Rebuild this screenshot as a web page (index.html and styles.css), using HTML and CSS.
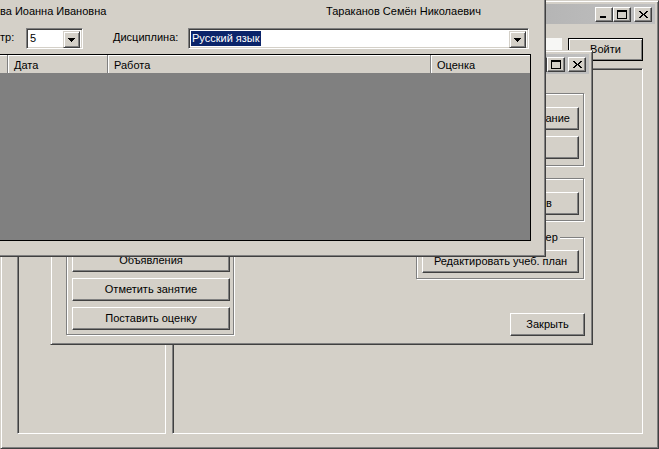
FILE: index.html
```html
<!DOCTYPE html>
<html lang="ru">
<head>
<meta charset="utf-8">
<title>Электронный журнал</title>
<link rel="stylesheet" href="styles.css">
</head>
<body>

<div class="win win-back">
  <div class="titlebar">
    <div class="caption-btns">
      <span class="cbtn cbtn-min"><svg width="6" height="2" viewBox="0 0 6 2"><path d="M0 0h6v2H0z" fill="#000"/></svg></span>
      <span class="cbtn"><svg width="10" height="9" viewBox="0 0 10 9"><path d="M0 0h10v2H0z M0 2h1v7H0z M9 2h1v7H9z M1 8h8v1H1z" fill="#000"/></svg></span>
      <span class="cbtn cbtn-close"><svg width="9" height="7" viewBox="0 0 9 7"><path d="M0 0h2v1H0z M7 0h2v1H7z M1 1h2v1H1z M6 1h2v1H6z M2 2h2v1H2z M5 2h2v1H5z M3 3h3v1H3z M2 4h2v1H2z M5 4h2v1H5z M1 5h2v1H1z M6 5h2v1H6z M0 6h2v1H0z M7 6h2v1H7z" fill="#000"/></svg></span>
    </div>
  </div>
  <div class="back-body">
    <div class="login-row">
      <div class="textbox"></div>
      <button class="btn btn-default">Войти</button>
    </div>
    <div class="panels">
      <div class="panel panel-left"></div>
      <div class="panel panel-right"></div>
    </div>
  </div>
</div>

<div class="win win-mid">
  <div class="titlebar">
    <div class="caption-btns">
      <span class="cbtn cbtn-min"><svg width="6" height="2" viewBox="0 0 6 2"><path d="M0 0h6v2H0z" fill="#000"/></svg></span>
      <span class="cbtn"><svg width="10" height="9" viewBox="0 0 10 9"><path d="M0 0h10v2H0z M0 2h1v7H0z M9 2h1v7H9z M1 8h8v1H1z" fill="#000"/></svg></span>
      <span class="cbtn cbtn-close"><svg width="9" height="7" viewBox="0 0 9 7"><path d="M0 0h2v1H0z M7 0h2v1H7z M1 1h2v1H1z M6 1h2v1H6z M2 2h2v1H2z M5 2h2v1H5z M3 3h3v1H3z M2 4h2v1H2z M5 4h2v1H5z M1 5h2v1H1z M6 5h2v1H6z M0 6h2v1H0z M7 6h2v1H7z" fill="#000"/></svg></span>
    </div>
  </div>
  <div class="mid-body">
    <div class="group group-left">
      <span class="group-label">Учитель</span>
      <div class="btn-stack stack-left">
        <button class="btn btn-wide">Расписание</button>
        <button class="btn btn-wide">Журнал</button>
        <button class="btn btn-wide">Домашнее задание</button>
        <button class="btn btn-wide">Ученики</button>
        <button class="btn btn-wide">Классы</button>
        <button class="btn btn-wide">Объявления</button>
        <button class="btn btn-wide">Отметить занятие</button>
        <button class="btn btn-wide">Поставить оценку</button>
      </div>
    </div>
    <div class="right-col">
      <div class="group g1">
        <span class="group-label">Завуч</span>
        <div class="btn-stack">
          <button class="btn btn-wide">Редактировать расписание</button>
          <button class="btn btn-wide">Журнал</button>
        </div>
      </div>
      <div class="group g2">
        <span class="group-label">Кадры</span>
        <div class="btn-stack">
          <button class="btn btn-wide">Список сотрудников</button>
        </div>
      </div>
      <div class="group g3">
        <span class="group-label label-g3">Диспетчер</span>
        <div class="btn-stack">
          <button class="btn btn-wide">Редактировать учеб. план</button>
        </div>
      </div>
      <button class="btn btn-close">Закрыть</button>
    </div>
  </div>
</div>

<div class="win win-front">
  <div class="titlebar titlebar-active"></div>
  <div class="front-body">
    <div class="names-row">
      <span class="name-student">ва Иоанна Ивановна</span>
      <span class="name-teacher">Тараканов Семён Николаевич</span>
    </div>
    <div class="filter-row">
      <span class="lbl lbl-sem">тр:</span>
      <div class="combo combo-sem">
        <span class="combo-text">5</span>
        <span class="combo-btn"><svg width="7" height="4" viewBox="0 0 7 4"><path d="M0 0h7v1H0z M1 1h5v1H1z M2 2h3v1H2z M3 3h1v1H3z" fill="#000"/></svg></span>
      </div>
      <span class="lbl lbl-disc">Дисциплина:</span>
      <div class="combo combo-disc">
        <span class="combo-text"><span class="sel">Русский язык</span></span>
        <span class="combo-btn"><svg width="7" height="4" viewBox="0 0 7 4"><path d="M0 0h7v1H0z M1 1h5v1H1z M2 2h3v1H2z M3 3h1v1H3z" fill="#000"/></svg></span>
      </div>
    </div>
    <div class="grid">
      <div class="grid-head">
        <div class="hcell hc0"></div>
        <div class="hcell hc1">Дата</div>
        <div class="hcell hc2">Работа</div>
        <div class="hcell hc3">Оценка</div>
      </div>
      <div class="grid-body"></div>
    </div>
  </div>
</div>

</body>
</html>
```

FILE: styles.css
```css
* { box-sizing: border-box; }
html, body { margin: 0; padding: 0; }
body {
  position: relative;
  width: 659px;
  height: 449px;
  overflow: hidden;
  background: #d4d0c8;
  font-family: "Liberation Sans", Arial, sans-serif;
  font-size: 11px;
  line-height: 13px;
  color: #000;
}

/* ---------- classic window frame ---------- */
.win {
  position: absolute;
  display: flex;
  flex-direction: column;
  background: #d4d0c8;
  border: 1px solid;
  border-color: #d4d0c8 #404040 #404040 #d4d0c8;
  box-shadow: inset 1px 1px 0 #fff, inset -1px -1px 0 #808080;
  padding: 3px;
}
.win-back  { left: 0;     top: 0;     width: 659px; height: 449px; }
.win-mid   { left: 50px;  top: 50px;  width: 543px; height: 295px; }
.win-front { left: -12px; top: -26px; width: 558px; height: 283px; }

.titlebar {
  flex: none;
  height: 20px;
  display: flex;
  justify-content: flex-end;
  align-items: flex-start;
  padding: 3px 3px 0 0;
  background: linear-gradient(to right, #808080, #c0c0c0);
}
.titlebar-active { background: linear-gradient(to right, #0a246a, #a6caf0); }

.caption-btns { display: flex; }
.cbtn {
  width: 18px;
  height: 15px;
  display: flex;
  align-items: center;
  justify-content: center;
  background: #d4d0c8;
  border: 1px solid;
  border-color: #fff #404040 #404040 #fff;
  box-shadow: inset -1px -1px 0 #808080;
}
.cbtn svg { display: block; }
.cbtn-min { align-items: flex-end; padding: 0 2px 3px 0; }
.cbtn-close { margin-left: 3px; }

/* ---------- buttons ---------- */
.btn {
  display: block;
  margin: 0;
  padding: 0;
  height: 23px;
  font: inherit;
  line-height: 13px;
  color: #000;
  text-align: center;
  background: #d4d0c8;
  border: 1px solid;
  border-color: #fff #404040 #404040 #fff;
  box-shadow: inset -1px -1px 0 #808080;
  border-radius: 0;
}
.btn-default {
  width: 75px;
  border-color: #000;
  box-shadow: inset 1px 1px 0 #fff, inset -1px -1px 0 #808080;
}
.btn-wide { width: 100%; }
.btn-close { width: 75px; align-self: flex-end; margin-top: auto; }

/* ---------- back window ---------- */
.back-body {
  flex: 1;
  display: flex;
  flex-direction: column;
  padding: 14px 12px 0 13px;
}
.login-row {
  display: flex;
  justify-content: flex-end;
  align-items: flex-start;
  gap: 6px;
}
.textbox { width: 160px; height: 20px; background: #f7f7f5; }
.panels {
  display: flex;
  gap: 6px;
  margin-top: 7px;
  height: 366px;
}
.panel {
  border: 1px solid;
  border-color: #808080 #fff #fff #808080;
  box-shadow: inset 1px 1px 0 #404040, inset -1px -1px 0 #d4d0c8;
}
.panel-left { width: 149px; }
.panel-right { flex: 1; }

/* ---------- middle window ---------- */
.mid-body {
  flex: 1;
  display: flex;
  justify-content: space-between;
  align-items: flex-start;
  padding: 19px 4px 5px 12px;
}
.group {
  display: flex;
  flex-direction: column;
  border: 1px solid #808080;
  box-shadow: 1px 1px 0 #fff, inset 1px 1px 0 #fff;
  padding: 0 4px 6px 5px;
}
.group-label {
  align-self: flex-start;
  margin: -7px 0 0 6px;
  padding: 0 2px;
  background: #d4d0c8;
}
.btn-stack {
  display: flex;
  flex-direction: column;
  gap: 6px;
  margin-top: 7px;
}
.group-left { width: 168px; padding: 0 3px 4px 5px; }
.stack-left { margin-top: 4px; }

.right-col {
  align-self: stretch;
  width: 169px;
  display: flex;
  flex-direction: column;
}
.right-col .group { width: 168px; }
.g2 { margin-top: 12px; padding-bottom: 5px; }
.g3 { margin-top: 16px; padding-bottom: 5px; }
.g3 .btn-stack { margin-top: 6px; }
.label-g3 { margin-left: 80px; }

/* ---------- front window ---------- */
.front-body {
  flex: 1;
  display: flex;
  flex-direction: column;
  padding: 7px 0 0 0;
}
.names-row {
  display: flex;
  padding-left: 8px;
  height: 13px;
}
.name-student { width: 326px; }

.filter-row {
  display: flex;
  align-items: flex-start;
  margin-top: 10px;
  height: 21px;
  padding: 0 13px 0 8px;
}
.lbl { margin-top: 3px; }
.lbl-sem { width: 26px; }
.lbl-disc { width: 75px; margin-left: 30px; }

.combo {
  height: 21px;
  display: flex;
  align-items: flex-start;
  background: #fff;
  border: 1px solid;
  border-color: #808080 #fff #fff #808080;
  box-shadow: inset 1px 1px 0 #404040, inset -1px -1px 0 #d4d0c8;
  padding: 2px;
}
.combo-sem { width: 57px; }
.combo-disc { flex: 1; }
.combo-text { flex: 1; line-height: 15px; padding-left: 1px; }
.combo-disc .combo-text { padding-left: 0; }
.sel {
  display: inline-block;
  background: #0a246a;
  color: #fff;
  padding: 0 1px;
  line-height: 15px;
}
.combo-btn {
  flex: none;
  width: 17px;
  height: 17px;
  display: flex;
  align-items: center;
  justify-content: center;
  background: #d4d0c8;
  border: 1px solid;
  border-color: #d4d0c8 #404040 #404040 #d4d0c8;
  box-shadow: inset 1px 1px 0 #fff, inset -1px -1px 0 #808080;
}
.combo-btn svg { display: block; }

.grid {
  display: flex;
  flex-direction: column;
  margin: 5px 11px 0 0;
  height: 187px;
  border: 1px solid #000;
  background: #808080;
}
.grid-head {
  display: flex;
  height: 18px;
  background: #d4d0c8;
}
.hcell {
  height: 18px;
  padding: 4px 0 0 6px;
  border-right: 1px solid #808080;
  box-shadow: inset 1px 1px 0 #fff;
}
.hc0 { width: 15px; }
.hc1 { width: 100px; }
.hc2 { width: 323px; }
.hc3 { flex: 1; border-right: 0; }
.grid-body { flex: 1; }
```
